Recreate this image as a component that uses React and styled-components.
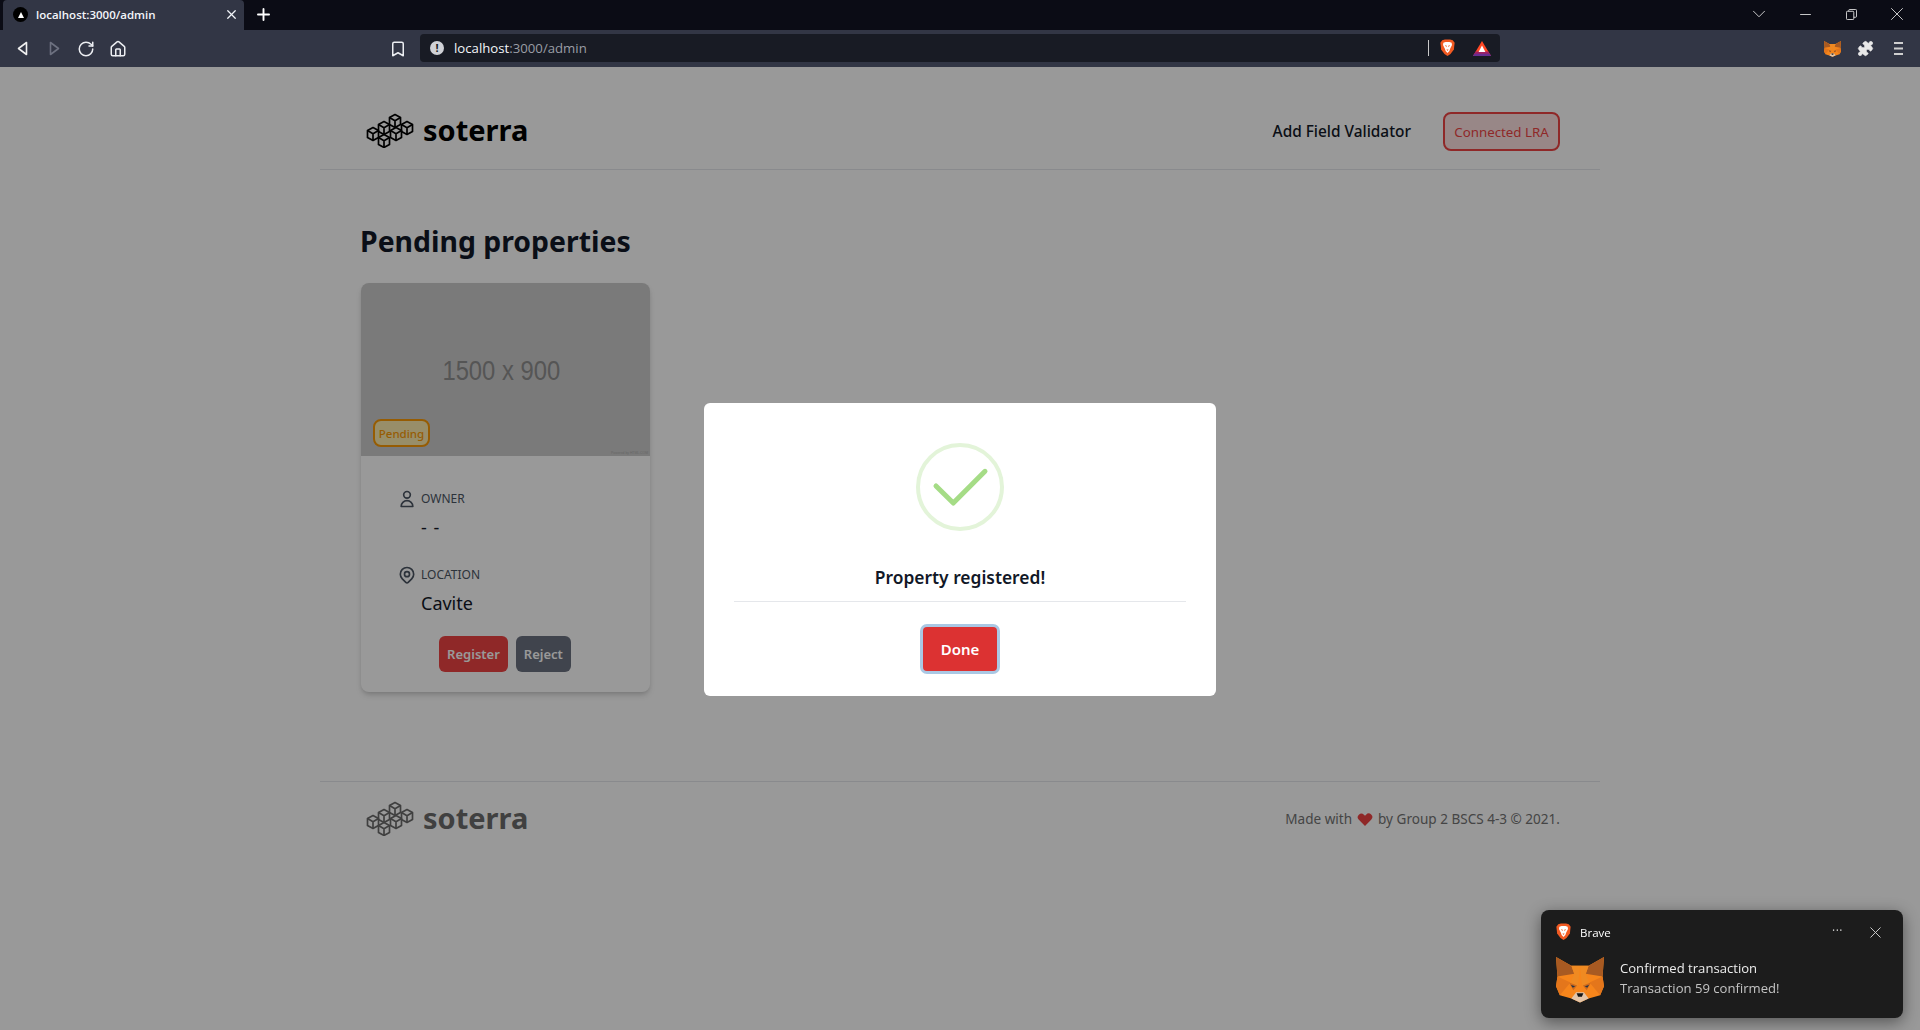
import React from 'react';
import styled, { createGlobalStyle } from 'styled-components';
import { HiOutlineUser, HiOutlineLocationMarker, HiHeart } from 'react-icons/hi';
import { RotateCw, Home, Bookmark, Plus, X, Minus, ChevronDown, Puzzle } from 'lucide-react';

const GlobalStyle = createGlobalStyle`
  html, body {
    margin: 0;
    padding: 0;
    height: 100%;
    overflow: hidden;
    background: #fff;
    font-family: "Noto Sans", "Open Sans", sans-serif;
  }
  * { box-sizing: border-box; }
`;

const Shell = styled.div`
  display: flex;
  flex-direction: column;
  height: 1030px;
`;

/* browser chrome */
const TabStrip = styled.div`
  height: 30px;
  background: #0b0c15;
  display: flex;
  align-items: flex-end;
  padding-left: 3px;
  color: #fff;
`;
const Tab = styled.div`
  width: 241px;
  height: 30px;
  background: #323645;
  border-radius: 4px 4px 0 0;
  display: flex;
  align-items: center;
  padding: 0 5px 1px 10px;
  font: 600 11.5px "Open Sans", sans-serif;
  color: #f2f5fa;
`;
const Favicon = styled.span`
  width: 15px;
  height: 15px;
  border-radius: 50%;
  background: #000;
  margin-right: 8px;
  display: flex;
  align-items: center;
  justify-content: center;
  &::after {
    content: '';
    border-left: 3.5px solid transparent;
    border-right: 3.5px solid transparent;
    border-bottom: 6px solid #fff;
  }
`;
const TabTitle = styled.span`
  flex: 1;
`;
const NewTab = styled.span`
  display: flex;
  margin-left: 10px;
  margin-bottom: 6px;
`;
const WindowButtons = styled.div`
  margin-left: auto;
  height: 30px;
  display: flex;
  align-items: center;
  color: #d8d8d8;
  padding: 0 0 2px 0;
`;
const WindowSlot = styled.span`
  width: 46px;
  display: flex;
  justify-content: center;
`;
const Toolbar = styled.div`
  height: 37px;
  background: #323645;
  display: flex;
  align-items: center;
  color: #eceef2;
  padding-left: 6px;
`;
const NavIcons = styled.div`
  display: flex;
  align-items: center;
  width: 374px;
`;
const ToolSlot = styled.span`
  width: ${p => p.$width || 32}px;
  display: flex;
  justify-content: center;
`;
const UrlBar = styled.div`
  width: 1080px;
  height: 28px;
  margin: 0 0 1px 4px;
  background: #181b24;
  border-radius: 4px;
  display: flex;
  align-items: center;
  padding: 0 9px 0 10px;
  font: 400 13.2px "Open Sans", sans-serif;
  color: #9a9da5;
`;
const InfoDot = styled.span`
  width: 14px;
  height: 14px;
  border-radius: 50%;
  background: #cfd1d6;
  color: #181b24;
  font: 700 11px/14px "Open Sans", sans-serif;
  text-align: center;
  margin-right: 10px;
`;
const Host = styled.span`
  color: #f3f5f8;
`;
const UrlRight = styled.div`
  margin-left: auto;
  display: flex;
  align-items: center;
`;
const Separator = styled.span`
  width: 1px;
  height: 16px;
  background: #c9c9c9;
  margin-right: 11px;
`;
const BatSlot = styled.span`
  display: flex;
  margin-left: 18px;
`;
const ToolbarRight = styled.div`
  margin-left: auto;
  display: flex;
  align-items: center;
  padding-right: 6px;
  color: #e8e8e8;
`;

/* page */
const Page = styled.div`
  position: relative;
  flex: 1;
  background: #fff;
  overflow: hidden;
`;
const Container = styled.div`
  width: 1280px;
  margin: 0 auto;
`;
const Nav = styled.nav`
  height: 103px;
  border-bottom: 1px solid #e5e7eb;
  padding: 26px 40px 0 46px;
  display: flex;
  align-items: center;
  justify-content: space-between;
`;
const Brand = styled.div`
  display: flex;
  align-items: center;
  gap: 7px;
  padding-bottom: ${p => p.$muted ? '2px' : '3px'};
  color: ${p => p.$muted ? '#6b6b6b' : '#000'};
`;
const BrandName = styled.span`
  font-size: 29px;
  font-weight: 700;
  line-height: 40px;
`;
const NavLinks = styled.div`
  display: flex;
  align-items: center;
  gap: 32px;
  padding-top: 1px;
`;
const NavLink = styled.a`
  font-size: 15.4px;
  font-weight: 500;
  color: #111827;
`;
const ConnectedButton = styled.div`
  height: 39px;
  width: 117px;
  border: 2px solid #ef4444;
  border-radius: 8px;
  background: #fee2e2;
  color: #ef4444;
  font-size: 13.3px;
  font-weight: 400;
  display: flex;
  align-items: center;
  justify-content: center;
`;
const Main = styled.main`
  padding: 51px 40px 0;
  height: 611px;
`;
const Heading = styled.h1`
  margin: 0 0 21px;
  font-size: 28.4px;
  line-height: 41px;
  font-weight: 700;
  color: #111827;
`;
const Card = styled.div`
  width: 289px;
  height: 409px;
  margin-left: 1px;
  border-radius: 8px;
  background: #fff;
  box-shadow: 0 4px 6px -1px rgba(0,0,0,.15), 0 2px 4px -1px rgba(0,0,0,.1);
  overflow: hidden;
`;
const Placeholder = styled.div`
  position: relative;
  height: 173px;
  background: #ccc;
  display: flex;
  align-items: center;
  justify-content: center;
`;
const PlaceholderText = styled.span`
  font: 400 28px "Liberation Sans", sans-serif;
  color: #8e8e8e;
  transform: scaleX(.85);
  margin: 2px 0 0 -8px;
`;
const PlaceholderCredit = styled.span`
  position: absolute;
  right: 2px;
  bottom: 1px;
  font: 400 3.4px "Liberation Sans", sans-serif;
  color: #aaa;
`;
const StatusBadge = styled.span`
  position: absolute;
  left: 12px;
  bottom: 9px;
  width: 57px;
  height: 28px;
  border: 2px solid #fb9a05;
  border-radius: 8px;
  background: #fdedb0;
  color: #fb9a05;
  font-size: 11.5px;
  font-weight: 500;
  display: flex;
  align-items: center;
  justify-content: center;
`;
const CardBody = styled.div`
  padding: 33px 36px 0;
`;
const Field = styled.div`
  margin-bottom: ${p => p.$last ? '20px' : '25px'};
`;
const FieldLabel = styled.div`
  display: flex;
  align-items: center;
  gap: 4px;
  font-size: 12px;
  line-height: 18px;
  color: #4b5563;
  svg { font-size: 20px; }
`;
const FieldValue = styled.div`
  margin: 5px 0 0 24px;
  font-size: 18px;
  line-height: 26px;
  word-spacing: 2px;
  color: #111827;
`;
const CardActions = styled.div`
  display: flex;
  justify-content: center;
  gap: 8px;
  margin-left: -1px;
`;
const ActionButton = styled.button`
  height: 36px;
  padding: 0 8px;
  border: 0;
  border-radius: 6px;
  background: ${p => p.$variant === 'reject' ? '#6b7280' : '#ef4444'};
  color: #fff;
  font: 600 13px "Noto Sans", sans-serif;
`;
const Footer = styled.footer`
  border-top: 1px solid #e5e7eb;
  height: 74px;
  padding: 0 40px 0 46px;
  display: flex;
  align-items: center;
  justify-content: space-between;
`;
const FooterText = styled.div`
  display: flex;
  align-items: center;
  font-size: 13.55px;
  color: #737373;
  svg { font-size: 18px; color: #ef4444; margin: 0 4px; }
`;

/* modal */
const Overlay = styled.div`
  position: absolute;
  inset: 0;
  background: rgba(0,0,0,.4);
  display: flex;
  align-items: center;
  justify-content: center;
`;
const Modal = styled.div`
  width: 512px;
  height: 293px;
  margin-top: 2px;
  background: #fff;
  border-radius: 6px;
  padding: 40px 30px 0;
  display: flex;
  flex-direction: column;
  align-items: center;
`;
const SuccessIcon = styled.svg`
  display: block;
  margin-bottom: 34px;
`;
const ModalTitle = styled.h3`
  margin: 0;
  width: 100%;
  padding-bottom: 12px;
  text-align: center;
  font-size: 17.4px;
  line-height: 24px;
  font-weight: 600;
  color: #111827;
  border-bottom: 1px solid #e5e7eb;
`;
const DoneButton = styled.button`
  margin-top: 25px;
  width: 74px;
  height: 44px;
  border: 0;
  border-radius: 4px;
  background: #dc3232;
  color: #fff;
  font: 600 15px "Noto Sans", sans-serif;
  box-shadow: 0 0 0 3px #aac8e4;
`;

/* system notification */
const Toast = styled.div`
  position: fixed;
  left: 1541px;
  top: 910px;
  width: 362px;
  height: 108px;
  border-radius: 8px;
  background: #1c1c1c;
  box-shadow: 0 4px 16px rgba(0,0,0,.45);
  padding: 11px 18px 0 15px;
  color: #fff;
  font-family: "Open Sans", sans-serif;
`;
const ToastHead = styled.div`
  display: flex;
  align-items: center;
  font-size: 11.5px;
  height: 22px;
`;
const ToastApp = styled.span`
  margin-left: 9px;
  flex: 1;
`;
const ToastDots = styled.span`
  color: #c8c8c8;
  font-size: 12px;
  letter-spacing: .5px;
  margin-right: 23px;
  margin-top: -4px;
`;
const ToastBody = styled.div`
  display: flex;
  align-items: flex-start;
  margin-top: 14px;
  gap: 16px;
`;
const ToastCopy = styled.div`
  padding-top: 1px;
`;
const ToastTitle = styled.div`
  font-size: 13.1px;
  line-height: 20px;
  color: #ededed;
`;
const ToastText = styled.div`
  font-size: 13.1px;
  line-height: 20px;
  color: #c4c4c4;
`;

const Cube = ({ x, y }) => (
  <g transform={`translate(${x} ${y})`} fill="none" stroke="currentColor" strokeWidth="1.7" strokeLinejoin="round">
    <path d="M0 -6.5 L5.5 -3.4 V3.4 L0 6.5 L-5.5 3.4 V-3.4 Z" />
    <path d="M-5.5 -3.4 L0 -.2 L5.5 -3.4 M0 -.2 V6.5" />
  </g>
);

const Logo = () => (
  <svg width="50" height="36" viewBox="0 0 50 36">
    <Cube x={29} y={9} />
    <Cube x={41} y={16} />
    <Cube x={18} y={16} />
    <Cube x={30} y={22} />
    <Cube x={7} y={22} />
    <Cube x={18} y={29} />
  </svg>
);

const BraveIcon = ({ size = 18 }) => (
  <svg width={size} height={size * 1.15} viewBox="0 0 20 23">
    <path d="M3 1.5 L6.5 .5 H13.5 L17 1.5 L19.5 5 L18.5 14 L14 20 L10 22.5 L6 20 L1.5 14 L.5 5 Z" fill="#f15a22" />
    <path d="M4.5 5 L7.5 4 H12.5 L15.5 5 L16 8 L13.5 13 L12.5 16 L10 18.5 L7.5 16 L6.5 13 L4 8 Z" fill="#fff" />
    <path d="M6.5 8 L9 9 L8.5 11 Z M13.5 8 L11 9 L11.5 11 Z M8.5 14 H11.5 L10 16 Z" fill="#f15a22" />
  </svg>
);

const BatIcon = () => (
  <svg width="18" height="15" viewBox="0 0 18 15">
    <path d="M9 0 L18 15 H0 Z" fill="#ff4724" />
    <path d="M2.6 10.6 H15.4 L18 15 H0 Z" fill="#9e1f63" />
    <path d="M1.3 12.8 H16.7 L18 15 H0 Z" fill="#662d91" />
    <path d="M9 4.5 L12.4 11 H5.6 Z" fill="#fff" />
  </svg>
);

const FoxIcon = ({ width, height }) => (
  <svg width={width} height={height} viewBox="0 0 100 94" preserveAspectRatio="none">
    <path d="M0 0 L32 18 H68 L100 0 L97 40 L100 60 L92 78 L68 85 L50 93 L32 85 L8 78 L0 60 L3 40 Z" fill="#f6851b" />
    <path d="M0 0 L32 18 L38 34 L3 40 Z" fill="#a85a22" />
    <path d="M100 0 L68 18 L62 34 L97 40 Z" fill="#a85a22" />
    <path d="M38 34 L32 18 H50 L46 60 L30 52 Z M62 34 L68 18 H50 L54 60 L70 52 Z" fill="#ef8a22" />
    <path d="M27 52 L44 58 L36 68 Z M73 52 L56 58 L64 68 Z" fill="#c9691f" />
    <path d="M31 57 L40 60 L35 63 Z M69 57 L60 60 L65 63 Z" fill="#233447" />
    <path d="M3 40 L30 52 L8 78 L0 60 Z M97 40 L70 52 L92 78 L100 60 Z" fill="#e4761b" />
    <path d="M32 85 L42 72 H58 L68 85 L50 93 Z" fill="#e4c5a8" />
    <path d="M43 74 H57 L54 81 H46 Z" fill="#161616" />
  </svg>
);

const BackIcon = () => (
  <svg width="11" height="15" viewBox="0 0 11 15" fill="none" stroke="#f0f0f0" strokeWidth="1.6" strokeLinejoin="round">
    <path d="M9.5 1.5 V13.5 L1.5 7.5 Z" />
  </svg>
);

const ForwardIcon = () => (
  <svg width="11" height="15" viewBox="0 0 11 15" fill="none" stroke="#6d7180" strokeWidth="1.6" strokeLinejoin="round">
    <path d="M1.5 1.5 V13.5 L9.5 7.5 Z" />
  </svg>
);

const RestoreIcon = () => (
  <svg width="11" height="11" viewBox="0 0 12 12" fill="none" stroke="#e0e0e0" strokeWidth="1">
    <rect x=".5" y="2.5" width="8" height="9" rx="1" />
    <path d="M3 2.5 V1.5 Q3 .5 4 .5 H10.5 Q11.5 .5 11.5 1.5 V8 Q11.5 9 10.5 9 H8.5" />
  </svg>
);

const MenuIcon = () => (
  <svg width="9" height="13" viewBox="0 0 9 13" fill="#cfcfcf">
    <rect width="9" height="2" />
    <rect y="5.5" width="9" height="2" />
    <rect y="11" width="9" height="2" />
  </svg>
);

export default function App() {
  return (
    <Shell>
      <GlobalStyle />
      <TabStrip>
        <Tab>
          <Favicon />
          <TabTitle>localhost:3000/admin</TabTitle>
          <X size={15} strokeWidth={2} />
        </Tab>
        <NewTab><Plus size={19} strokeWidth={2.4} /></NewTab>
        <WindowButtons>
          <WindowSlot><ChevronDown size={22} strokeWidth={1} /></WindowSlot>
          <WindowSlot><Minus size={17} strokeWidth={1.3} /></WindowSlot>
          <WindowSlot><RestoreIcon /></WindowSlot>
          <WindowSlot><X size={22} strokeWidth={1} /></WindowSlot>
        </WindowButtons>
      </TabStrip>
      <Toolbar>
        <NavIcons>
          <ToolSlot><BackIcon /></ToolSlot>
          <ToolSlot><ForwardIcon /></ToolSlot>
          <ToolSlot><RotateCw size={18} strokeWidth={2} /></ToolSlot>
          <ToolSlot><Home size={18} strokeWidth={2} /></ToolSlot>
        </NavIcons>
        <ToolSlot $width={36}><Bookmark size={18} strokeWidth={2} /></ToolSlot>
        <UrlBar>
          <InfoDot>!</InfoDot>
          <Host>localhost</Host>:3000/admin
          <UrlRight>
            <Separator />
            <BraveIcon size={15} />
            <BatSlot><BatIcon /></BatSlot>
          </UrlRight>
        </UrlBar>
        <ToolbarRight>
          <ToolSlot $width={33}><FoxIcon width={17} height={16} /></ToolSlot>
          <ToolSlot $width={33}><Puzzle size={17} fill="#e8e8e8" strokeWidth={1} /></ToolSlot>
          <ToolSlot $width={32}><MenuIcon /></ToolSlot>
        </ToolbarRight>
      </Toolbar>

      <Page>
        <Container>
          <Nav>
            <Brand>
              <Logo />
              <BrandName>soterra</BrandName>
            </Brand>
            <NavLinks>
              <NavLink>Add Field Validator</NavLink>
              <ConnectedButton>Connected LRA</ConnectedButton>
            </NavLinks>
          </Nav>
          <Main>
            <Heading>Pending properties</Heading>
            <Card>
              <Placeholder>
                <PlaceholderText>1500 x 900</PlaceholderText>
                <PlaceholderCredit>Powered by HTML.COM</PlaceholderCredit>
                <StatusBadge>Pending</StatusBadge>
              </Placeholder>
              <CardBody>
                <Field>
                  <FieldLabel><HiOutlineUser />OWNER</FieldLabel>
                  <FieldValue>- -</FieldValue>
                </Field>
                <Field $last>
                  <FieldLabel><HiOutlineLocationMarker />LOCATION</FieldLabel>
                  <FieldValue>Cavite</FieldValue>
                </Field>
                <CardActions>
                  <ActionButton>Register</ActionButton>
                  <ActionButton $variant="reject">Reject</ActionButton>
                </CardActions>
              </CardBody>
            </Card>
          </Main>
          <Footer>
            <Brand $muted>
              <Logo />
              <BrandName>soterra</BrandName>
            </Brand>
            <FooterText>Made with <HiHeart /> by Group 2 BSCS 4-3 © 2021.</FooterText>
          </Footer>
        </Container>

        <Overlay>
          <Modal>
            <SuccessIcon width="88" height="88" viewBox="0 0 88 88" fill="none">
              <circle cx="44" cy="44" r="42" stroke="#e3f4d9" strokeWidth="4" />
              <path d="M20 43 L37.3 60 L69 28.3" stroke="#a5dc86" strokeWidth="5" strokeLinecap="round" strokeLinejoin="round" />
            </SuccessIcon>
            <ModalTitle>Property registered!</ModalTitle>
            <DoneButton>Done</DoneButton>
          </Modal>
        </Overlay>
      </Page>

      <Toast>
        <ToastHead>
          <BraveIcon size={15} />
          <ToastApp>Brave</ToastApp>
          <ToastDots>···</ToastDots>
          <X size={19} strokeWidth={1.2} color="#d0d0d0" />
        </ToastHead>
        <ToastBody>
          <FoxIcon width={48} height={46} />
          <ToastCopy>
            <ToastTitle>Confirmed transaction</ToastTitle>
            <ToastText>Transaction 59 confirmed!</ToastText>
          </ToastCopy>
        </ToastBody>
      </Toast>
    </Shell>
  );
}
